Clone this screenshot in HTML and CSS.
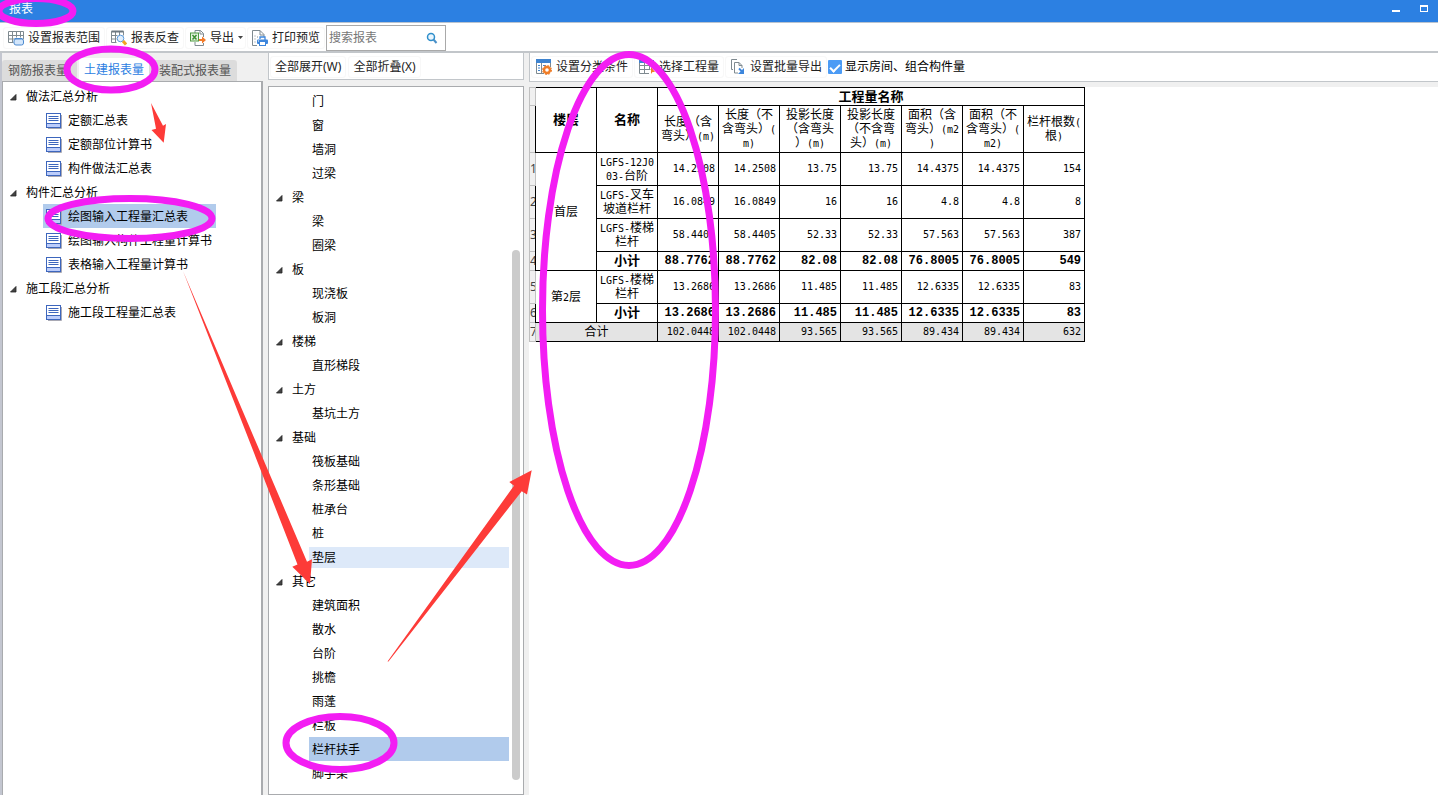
FILE: index.html
```html
<!DOCTYPE html>
<html lang="zh-CN">
<head>
<meta charset="utf-8">
<title>报表</title>
<link rel="stylesheet" href="styles.css">
</head>
<body>
<svg class="defs" aria-hidden="true">
  <symbol id="doc" viewBox="0 0 16 16">
    <path d="M2 15.500H15.500V2" fill="none" stroke="#a9a9b4"/>
    <rect x=".5" y=".5" width="14" height="14" fill="#fff" stroke="#3d66bd"/>
    <path d="M1 10.500H14V14H1z" fill="#bccdfb"/>
    <path d="M2.500 3.500h10M2.500 5.500h10M2.500 7.500h10M1 10.500h13" stroke="#3d66bd" fill="none"/>
  </symbol>
  <symbol id="tri" viewBox="0 0 7 7"><path d="M6 .5V6H.5z" fill="#444" stroke="#222" stroke-width=".8"/></symbol>
</svg>

<header class="titlebar">
  <h1>报表</h1>
  <div class="window-buttons">
    <button aria-label="最小化"><svg width="8" height="8"><path d="M0 6h8" stroke="#fff" stroke-width="2"/></svg></button>
    <button aria-label="最大化"><svg width="8" height="8"><path d="M.5 1v6M7.500 1v6M0 6.500h8" stroke="#fff" fill="none"/><path d="M0 1h8" stroke="#fff" stroke-width="2"/></svg></button>
  </div>
</header>

<div class="toolbar">
  <button class="tool">
    <svg width="16" height="16" viewBox="0 0 16 16"><path d="M.5 1.500h15v8M.5 1.500v11h5M.5 5.500h15M.5 9h6M4.500 1.500v11M8.500 1.500v6M12.500 1.500v6" fill="none" stroke="#7f8a90"/><rect x="6" y="9" width="9.500" height="6" rx="2" fill="#d3e6fb" stroke="#4c8ad0"/><path d="M6.500 8.500h8" stroke="#4c8ad0"/></svg>
    设置报表范围
  </button>
  <button class="tool">
    <svg width="16" height="16" viewBox="0 0 16 16"><path d="M.5 1.500h12v4M.5 1.500v11h5M.5 5.500h6M.5 9h5M4.500 1.500v11M8.500 1.500v4" fill="none" stroke="#7f8a90"/><path d="M.5 1.500h12" stroke="#6d7880" stroke-width="2"/><circle cx="9.500" cy="8.500" r="3.300" fill="#e2effc" stroke="#5c9bdc"/><path d="M12 11l3 3.500" stroke="#f3a323" stroke-width="3"/></svg>
    报表反查
  </button>
  <button class="tool">
    <svg width="16" height="16" viewBox="0 0 16 16"><path d="M5 3V.5h5.500l3 3V7M5 12v3.500h8.500V13M10 .5V4h3.500" fill="none" stroke="#7f8a90"/><rect x=".5" y="3" width="8" height="8" fill="#e5f1e0" stroke="#4e9b42"/><path d="M2.500 5l4 4.500m0-4.500l-4 4.500" stroke="#3d8f32" stroke-width="1.500"/><path d="M9 9h3V6.500L16 10l-4 3.500V11H9z" fill="#f27a28"/></svg>
    导出
    <svg class="caret" width="5" height="3"><path d="M0 0h5L2.500 3z" fill="#444"/></svg>
  </button>
  <button class="tool">
    <svg width="16" height="16" viewBox="0 0 16 16"><path d="M5 15.500H.5V.5H8l4 4V7M8 .5V5h4" fill="none" stroke="#7f8a90"/><path d="M2.500 6h1M2.500 9h1M2.500 12h1M5 7h1" stroke="#7f8a90"/><path d="M8 9V7h5v3" fill="#fff" stroke="#3d86dc" stroke-width="1.300"/><rect x="5" y="9.500" width="11" height="4.500" rx="1" fill="#3d86dc"/><rect x="7.500" y="11.500" width="6" height="4" fill="#fff" stroke="#3d86dc"/><path d="M6 11h1" stroke="#fff"/></svg>
    打印预览
  </button>
  <label class="search">
    <input type="text" placeholder="搜索报表" aria-label="搜索报表">
    <svg width="12" height="12" viewBox="0 0 12 12"><circle cx="5" cy="5" r="3.500" fill="#eaf6ff" stroke="#2f8fcb" stroke-width="1.500"/><path d="M7.500 7.500L10.500 11" stroke="#4a90c8" stroke-width="2"/></svg>
  </label>
</div>

<main class="workspace">
  <section class="reports">
    <div class="tabs" role="tablist">
      <button role="tab" class="tab">钢筋报表量</button>
      <button role="tab" class="tab active" aria-selected="true">土建报表量</button>
      <button role="tab" class="tab last">装配式报表量</button>
    </div>
    <nav class="panel report-tree">
      <ul class="tree">
        <li><button class="group"><svg><use href="#tri"/></svg>做法汇总分析</button></li>
        <li><button class="item"><svg><use href="#doc"/></svg>定额汇总表</button></li>
        <li><button class="item"><svg><use href="#doc"/></svg>定额部位计算书</button></li>
        <li><button class="item"><svg><use href="#doc"/></svg>构件做法汇总表</button></li>
        <li><button class="group"><svg><use href="#tri"/></svg>构件汇总分析</button></li>
        <li><button class="item selected"><svg><use href="#doc"/></svg>绘图输入工程量汇总表</button></li>
        <li><button class="item"><svg><use href="#doc"/></svg>绘图输入构件工程量计算书</button></li>
        <li><button class="item"><svg><use href="#doc"/></svg>表格输入工程量计算书</button></li>
        <li><button class="group"><svg><use href="#tri"/></svg>施工段汇总分析</button></li>
        <li><button class="item"><svg><use href="#doc"/></svg>施工段工程量汇总表</button></li>
      </ul>
    </nav>
  </section>

  <section class="components">
    <div class="component-actions">
      <button class="tool">全部展开(W)</button>
      <button class="tool">全部折叠(X)</button>
    </div>
    <nav class="panel component-tree">
      <ul class="tree">
        <li><button class="item">门</button></li>
        <li><button class="item">窗</button></li>
        <li><button class="item">墙洞</button></li>
        <li><button class="item">过梁</button></li>
        <li><button class="group"><svg><use href="#tri"/></svg>梁</button></li>
        <li><button class="item">梁</button></li>
        <li><button class="item">圈梁</button></li>
        <li><button class="group"><svg><use href="#tri"/></svg>板</button></li>
        <li><button class="item">现浇板</button></li>
        <li><button class="item">板洞</button></li>
        <li><button class="group"><svg><use href="#tri"/></svg>楼梯</button></li>
        <li><button class="item">直形梯段</button></li>
        <li><button class="group"><svg><use href="#tri"/></svg>土方</button></li>
        <li><button class="item">基坑土方</button></li>
        <li><button class="group"><svg><use href="#tri"/></svg>基础</button></li>
        <li><button class="item">筏板基础</button></li>
        <li><button class="item">条形基础</button></li>
        <li><button class="item">桩承台</button></li>
        <li><button class="item">桩</button></li>
        <li><button class="item hovered">垫层</button></li>
        <li><button class="group"><svg><use href="#tri"/></svg>其它</button></li>
        <li><button class="item">建筑面积</button></li>
        <li><button class="item">散水</button></li>
        <li><button class="item">台阶</button></li>
        <li><button class="item">挑檐</button></li>
        <li><button class="item">雨蓬</button></li>
        <li><button class="item">栏板</button></li>
        <li><button class="item selected">栏杆扶手</button></li>
        <li><button class="item">脚手架</button></li>
      </ul>
      <div class="scroll-track"><div class="scroll-thumb"></div></div>
    </nav>
  </section>

  <section class="result">
    <div class="result-tools">
      <button class="tool">
        <svg width="16" height="16" viewBox="0 0 16 16"><path d="M.5 1v13.500H8M14.500 4v4" fill="none" stroke="#7f8a90"/><path d="M0 0h15v4H0z" fill="#3e83cf"/><path d="M5.500 4v10" stroke="#7f8a90"/><path d="M2 6.500h2M2 9h2M2 11.500h2M7 6.500h3" stroke="#3e83cf"/><circle cx="11" cy="11" r="3" fill="#fff" stroke="#ef7d28" stroke-width="2.400"/><circle cx="11" cy="11" r="4.500" fill="none" stroke="#ef7d28" stroke-dasharray="2 1.530"/></svg>
        设置分类条件
      </button>
      <button class="tool">
        <svg width="16" height="16" viewBox="0 0 16 16"><path d="M.5 2v12.500H10M.5 6.500h14M.5 10.500h11M5.500 3v11.500M10.500 3v8M14.500 3v6" fill="none" stroke="#7f8a90"/><path d="M0 1h15v3H0z" fill="#3e83cf"/><path d="M12 8l4 5h-2.500L12 15z" fill="#ef7d28"/></svg>
        选择工程量
      </button>
      <button class="tool">
        <svg width="16" height="16" viewBox="0 0 16 16"><path d="M3 10.500H1.500V.5H7M4.500 3.500V14H8M4.500 3.500H9l3 3V9M9 3.500v3h3" fill="none" stroke="#7f8a90"/><path d="M9 9.500l3.500 3.500" stroke="#3d86dc" stroke-width="1.800"/><path d="M14 9v6H8z" fill="#3d86dc"/></svg>
        设置批量导出
      </button>
      <label class="check"><input type="checkbox" checked>显示房间、组合构件量</label>
    </div>
    <div class="sheet">
      <table>
        <colgroup><col class="index-col"><col span="9" class="data-col"></colgroup>
        <thead>
          <tr class="short"><td class="index"></td><th rowspan="2">楼层</th><th rowspan="2">名称</th><th colspan="7" class="caption">工程量名称</th></tr>
          <tr class="heads"><td class="index"></td>
            <th>长度（含<br>弯头）<i>(m)</i></th>
            <th>长度（不<br>含弯头）<i>(</i><br><i>m)</i></th>
            <th>投影长度<br>（含弯头<br>）<i>(m)</i></th>
            <th>投影长度<br>（不含弯<br>头）<i>(m)</i></th>
            <th>面积（含<br>弯头）<i>(m2</i><br><i>)</i></th>
            <th>面积（不<br>含弯头）<i>(</i><br><i>m2)</i></th>
            <th>栏杆根数<i>(</i><br>根<i>)</i></th></tr>
        </thead>
        <tbody>
          <tr class="tall"><td class="index">1</td><td class="name" rowspan="4">首层</td><td class="name"><i>LGFS-12J0</i><br><i>03-</i>台阶</td><td>14.2508</td><td>14.2508</td><td>13.75</td><td>13.75</td><td>14.4375</td><td>14.4375</td><td>154</td></tr>
          <tr class="tall"><td class="index">2</td><td class="name"><i>LGFS-</i>叉车<br>坡道栏杆</td><td>16.0849</td><td>16.0849</td><td>16</td><td>16</td><td>4.8</td><td>4.8</td><td>8</td></tr>
          <tr class="tall"><td class="index">3</td><td class="name"><i>LGFS-</i>楼梯<br>栏杆</td><td>58.4405</td><td>58.4405</td><td>52.33</td><td>52.33</td><td>57.563</td><td>57.563</td><td>387</td></tr>
          <tr class="short subtotal"><td class="index">4</td><td class="name">小计</td><td>88.7762</td><td>88.7762</td><td>82.08</td><td>82.08</td><td>76.8005</td><td>76.8005</td><td>549</td></tr>
          <tr class="tall"><td class="index">5</td><td class="name" rowspan="2">第<i>2</i>层</td><td class="name"><i>LGFS-</i>楼梯<br>栏杆</td><td>13.2686</td><td>13.2686</td><td>11.485</td><td>11.485</td><td>12.6335</td><td>12.6335</td><td>83</td></tr>
          <tr class="short subtotal"><td class="index">6</td><td class="name">小计</td><td>13.2686</td><td>13.2686</td><td>11.485</td><td>11.485</td><td>12.6335</td><td>12.6335</td><td>83</td></tr>
          <tr class="short total"><td class="index">7</td><td class="name" colspan="2">合计</td><td>102.0448</td><td>102.0448</td><td>93.565</td><td>93.565</td><td>89.434</td><td>89.434</td><td>632</td></tr>
        </tbody>
      </table>
    </div>
  </section>
</main>

<svg class="markup" width="1438" height="795" viewBox="0 0 1438 795" aria-hidden="true">
  <g fill="none" stroke="#f31df3" stroke-width="7">
    <ellipse cx="36" cy="11" rx="37" ry="12.500"/>
    <ellipse cx="111" cy="69.500" rx="44" ry="20.500"/>
    <ellipse cx="130" cy="218.500" rx="82" ry="20"/>
    <ellipse cx="340" cy="743" rx="54" ry="26.500"/>
    <ellipse cx="629" cy="310" rx="86.500" ry="255.500"/>
  </g>
  <g fill="#fd3b38">
    <path d="M151 103L163 125.700L166 124L163.700 142.700L151.500 130L156 128.700z"/>
    <path d="M183 271L307 561.700L312 559.300L310 584L292.300 566.700L297.500 564.500z"/>
    <path d="M387.500 661.500L514 485.700L509.300 482L531.700 470.300L527 494.500L521.700 491.300L388.500 661.500z"/>
  </g>
</svg>
</body>
</html>
```

FILE: styles.css
```css
* { box-sizing: border-box; }

body {
  margin: 0;
  height: 100vh;
  display: flex;
  flex-direction: column;
  overflow: hidden;
  background: #f0f0f0;
  color: #000;
  font: 12px/16px "Noto Sans", "Noto Sans CJK SC", sans-serif;
}

button, input {
  font: inherit;
  color: inherit;
  margin: 0;
  padding: 0;
  border: 0;
  background: none;
}

button { white-space: nowrap; }
svg { flex: none; display: block; }
.defs { position: absolute; width: 0; height: 0; }

.titlebar {
  flex: none;
  height: 23px;
  display: flex;
  justify-content: space-between;
  padding: 0 10px 0 9px;
  background: #2c80e2;
  border-bottom: 1px solid #b9c3cf;
  color: #fff;
}
.titlebar h1 { margin: 0; font-size: 12px; font-weight: 400; line-height: 18px; }
.window-buttons { display: flex; gap: 20px; padding-top: 5px; align-items: flex-start; }

.toolbar {
  flex: none;
  height: 30px;
  display: flex;
  align-items: center;
  gap: 1px;
  padding: 1px 3px 0;
  background: #fff;
  border-bottom: 2px solid #c2c6ca;
}
.tool {
  display: flex;
  align-items: center;
  gap: 4px;
  height: 22px;
  padding: 0 4px;
  border: 1px solid #f8f8f8;
  border-radius: 3px;
  color: #222;
}
.tool .caret { margin-right: -2px; }
.search {
  display: flex;
  align-items: center;
  width: 120px;
  height: 26px;
  padding: 0 7px 0 2px;
  border: 1px solid #a9a9a9;
  background: #fff;
}
.search input { flex: 1; min-width: 0; outline: 0; }
.search input::placeholder { color: #777; opacity: 1; }

.workspace { flex: 1; min-height: 0; display: flex; gap: 5px; }

.reports {
  flex: none;
  width: 263px;
  display: flex;
  flex-direction: column;
  border-left: 2px solid #c3c6d0;
}
.tabs { display: flex; align-items: flex-end; height: 28px; }
.tab {
  height: 21px;
  padding: 0 9px 0 6px;
  background: #dcdcdc;
  color: #555;
  border-radius: 3px 3px 0 0;
}
.tab.active { height: 23px; padding: 0 5px; margin-left: 2px; background: #fff; color: #2c80e2; }
.tab.last { padding: 0 6px 0 10px; }

.panel { flex: 1; min-height: 0; background: #fff; border: 1px solid #a9abae; }
.report-tree { border-width: 1px 2px 0 1px; padding-top: 2px; }
.tree { list-style: none; margin: 0; padding: 0; }
.tree li { height: 24px; display: flex; }
.group, .item { display: flex; align-items: center; padding-top: 2px; text-align: left; }
.group { gap: 9px; padding-left: 7px; }
.group svg { width: 7px; height: 7px; }
.item { flex: 1; gap: 6px; }
.item svg { width: 16px; height: 16px; }
.selected { background: #b1cbec; }
.report-tree .tree { width: max-content; }
.report-tree .item { margin-left: 40px; padding: 2px 4px 0 3px; }

.components { flex: none; width: 256px; display: flex; flex-direction: column; gap: 6px; }
.component-actions {
  height: 27px;
  display: flex;
  align-items: center;
  gap: 2px;
  padding: 1px 1px 0;
  background: #fff;
  border: 1px solid #c2c6ca;
  border-top: 0;
}
.component-tree { display: flex; padding: 2px 3px 0 0; }
.component-tree .tree { flex: 1; }
.component-tree .item { margin: 0 3px 0 40px; padding-left: 3px; }
.component-tree .hovered { background: #dde9f9; margin-top: 2px; margin-bottom: 1px; padding-top: 0; }
.scroll-track { width: 8px; display: flex; padding: 161px 0 14px; }
.scroll-thumb { flex: 1; border-radius: 4px; background: #cbcbcb; }

.result { flex: 1; min-width: 0; display: flex; flex-direction: column; gap: 5px; }
.result-tools {
  height: 29px;
  display: flex;
  align-items: center;
  gap: 1px;
  padding-left: 1px;
  background: #fff;
  border: 1px solid #c2c6ca;
  border-width: 0 0 1px 1px;
}
.check { display: flex; align-items: center; gap: 3px; white-space: nowrap; }
.check input {
  appearance: none;
  width: 14px;
  height: 14px;
  display: grid;
  place-items: center;
  border-radius: 1px;
  background: #4b9bf5;
}
.check input:checked::after {
  content: "";
  width: 8px;
  height: 4px;
  border: solid #fff;
  border-width: 0 0 2px 2px;
  transform: rotate(-45deg);
}

.sheet { flex: 1; min-height: 0; background: #fff; overflow: hidden; }
table { width: 556px; table-layout: fixed; border-collapse: collapse; line-height: 14px; }
.index-col { width: 6px; }
.data-col { width: 61px; }
th, td { padding: 0; border: 1px solid #000; }
td { padding-right: 3px; text-align: right; font-family: "DejaVu Sans Mono", monospace; font-size: 10px; }
th { font-family: "Liberation Sans", "Noto Sans CJK SC", sans-serif; font-size: 13px; }
.heads th { font-size: 12px; font-weight: 400; }
i { font: 10px/10px "DejaVu Sans Mono", monospace; }
.name { padding: 0; text-align: center; font-family: "Liberation Sans", "Noto Sans CJK SC", sans-serif; font-size: 12px; }
.short { height: 19px; }
thead .short { height: 18px; }
.caption { line-height: 14px; }
.heads { height: 47px; }
.tall { height: 33px; }
.subtotal td { font-family: "Liberation Mono", monospace; font-size: 12px; font-weight: 700; }
.subtotal .name { font-family: "Liberation Sans", "Noto Sans CJK SC", sans-serif; font-size: 13px; }
.total { background: #e4e4e4; }
tr .index, .subtotal .index {
  padding: 0;
  overflow: hidden;
  border-color: #c0c0c0;
  background: #f0f0f0;
  color: #444;
  text-align: left;
  font: 12px/14px "Noto Sans", sans-serif;
}

.markup { position: absolute; top: 0; left: 0; pointer-events: none; }
```
